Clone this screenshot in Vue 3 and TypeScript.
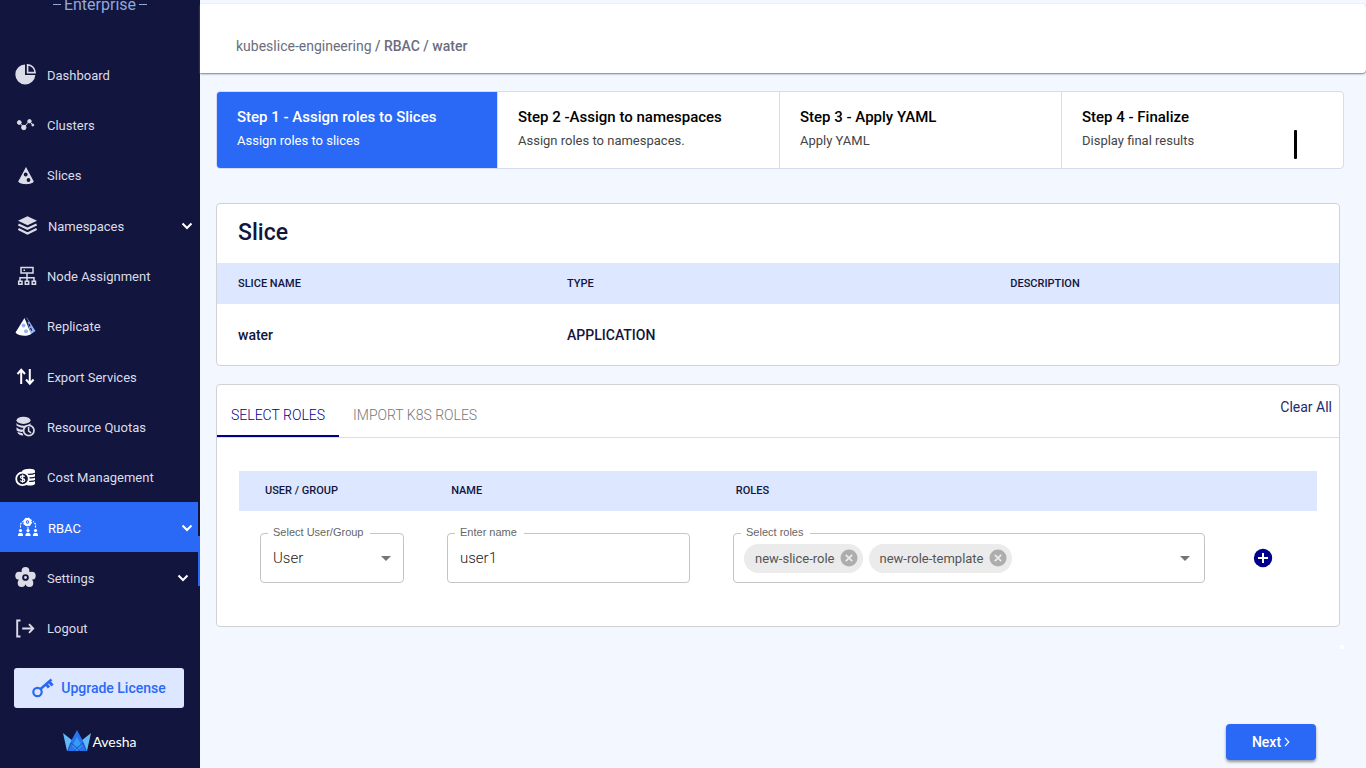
<script setup lang="ts">
import { ref } from 'vue'

interface NavItem {
  id: string
  label: string
  inset?: boolean
  arrow?: boolean
  active?: boolean
}

const nav: NavItem[] = [
  { id: 'dashboard', label: 'Dashboard' },
  { id: 'clusters', label: 'Clusters' },
  { id: 'slices', label: 'Slices' },
  { id: 'namespaces', label: 'Namespaces', inset: true, arrow: true },
  { id: 'nodes', label: 'Node Assignment' },
  { id: 'replicate', label: 'Replicate' },
  { id: 'export', label: 'Export Services' },
  { id: 'quotas', label: 'Resource Quotas' },
  { id: 'cost', label: 'Cost Management' },
  { id: 'rbac', label: 'RBAC', inset: true, arrow: true, active: true },
  { id: 'settings', label: 'Settings', arrow: true },
  { id: 'logout', label: 'Logout' },
]

const steps = [
  { title: 'Step 1 - Assign roles to Slices', text: 'Assign roles to slices' },
  { title: 'Step 2 -Assign to namespaces', text: 'Assign roles to namespaces.' },
  { title: 'Step 3 - Apply YAML', text: 'Apply YAML' },
  { title: 'Step 4 - Finalize', text: 'Display final results' },
]

const subject = ref('User')
const name = ref('user1')
const roles = ref(['new-slice-role', 'new-role-template'])

function removeRole(role: string) {
  roles.value = roles.value.filter((r) => r !== role)
}

function clearAll() {
  roles.value = []
  name.value = ''
}
</script>

<template>
  <div class="app">
    <aside class="sidebar">
      <div class="edition"><span>Enterprise</span></div>
      <nav class="nav">
        <a
          v-for="item in nav"
          :key="item.id"
          href="#"
          class="nav-item"
          :class="{ inset: item.inset, active: item.active }"
        >
          <svg class="nav-icon" viewBox="0 0 24 24" width="24" height="24" aria-hidden="true">
            <g v-if="item.id === 'dashboard'" fill="#dcdce8">
              <path d="M11 1.500A10 10 0 1 0 21.300 12H11z" />
              <path d="M13.600 1.900v7.700h7.500a7.600 7.600 0 0 0-7.500-7.700z" fill="none" stroke="#dcdce8" stroke-width="1.600" />
            </g>
            <g v-else-if="item.id === 'clusters'" fill="#dcdce8" stroke="#dcdce8" stroke-width="1">
              <path d="M5.500 9.500l4.300 5 5.500-6.500 3.500 4" fill="none" />
              <circle cx="5.300" cy="9.500" r="1.900" />
              <circle cx="9.800" cy="14.500" r="2.200" />
              <circle cx="15.500" cy="8.200" r="1.700" />
              <circle cx="18.800" cy="12" r="1" />
            </g>
            <g v-else-if="item.id === 'slices'">
              <path d="M12 3L4.200 17.500c1.500 3.500 14 3.500 15.600 0z" fill="#dcdce8" />
              <circle cx="11.700" cy="10.500" r="1.900" fill="#12153d" />
              <circle cx="14.500" cy="16" r="1.900" fill="#12153d" />
            </g>
            <g v-else-if="item.id === 'namespaces'" fill="none" stroke="#dcdce8" stroke-width="2.100">
              <path d="M11.500 2.200l9.500 4.500-9.500 4.500L2 6.700z" fill="#dcdce8" stroke="none" />
              <path d="M2.400 10.500l9.100 4.300 9.100-4.300M2.400 15l9.100 4.500 9.100-4.500" />
            </g>
            <g v-else-if="item.id === 'nodes'" fill="none" stroke="#dcdce8" stroke-width="1.500">
              <path d="M7 3.500h12v5.600H7zM13 9.100v8M6 17v-3.200h14V17M4.700 17.200h3.300v3.100H4.700zM11.300 17.200h3.400v3.100h-3.400zM18.200 17.200h3.300v3.100h-3.300zM9.500 6.300H11" />
            </g>
            <g v-else-if="item.id === 'replicate'">
              <path d="M12.500 2l9 14-5 3.500z" fill="#95b4f5" />
              <path d="M13.200 4.500l5 12.500" stroke="#12153d" stroke-dasharray="3 1.500" stroke-width="1.200" />
              <path d="M10.500 3L1.500 17.500c2.500 3.500 12 4.500 15.500 1.500z" fill="#fff" />
              <g fill="#95b4f5"><circle cx="9.500" cy="10.500" r="1.900" /><circle cx="12" cy="16.200" r="2" /></g>
            </g>
            <path v-else-if="item.id === 'export'" d="M7.200 19V4.500M3.500 9l3.700-4.200L11 9M15.800 4v14.500M12 14.500l3.800 4.200 3.800-4.200" fill="none" stroke="#fff" stroke-width="2" />
            <g v-else-if="item.id === 'quotas'">
              <ellipse cx="9.500" cy="5.300" rx="7" ry="3.600" fill="#dcdce8" />
              <path d="M2.500 8c2 3.500 12 3.500 14 0v3c-4 3-10 2.500-14-.5zM2.500 12.300c2 2 4 2.300 7 2.500l-1 2.300c-3 0-6-1-6-2.300zM3.500 17l5 1.300.8 2.300c-3 0-5.800-1.500-5.800-3.600z" fill="#dcdce8" />
              <circle cx="14.800" cy="15.500" r="5.200" fill="#12153d" stroke="#dcdce8" stroke-width="1.700" />
              <path d="M14.600 12v4.200l2.500 1.700" fill="none" stroke="#dcdce8" stroke-width="1.500" />
            </g>
            <g v-else-if="item.id === 'cost'">
              <path d="M8 5c2-2.500 13-3.300 13 .3v12.700c-2 2-7 2-10 .5z" fill="#fff" />
              <path d="M13 8.300q5 .5 8-1M14 11.800q5 .5 8-1M14 15.300q5 .5 8-1" fill="none" stroke="#12153d" stroke-width="1.200" />
              <circle cx="8.500" cy="12.800" r="6.300" fill="#12153d" stroke="#fff" stroke-width="1.800" />
              <path d="M10.700 10.700c-1-1.200-4.300-1-4.200.6.100 1.800 4.300.9 4.300 2.900 0 1.700-3.500 1.800-4.600.3M8.600 8.600v8.200" fill="none" stroke="#fff" stroke-width="1.200" />
            </g>
            <g v-else-if="item.id === 'rbac'" fill="#fff">
              <circle cx="11.500" cy="6" r="2.800" fill="none" stroke="#fff" stroke-width="2.200" />
              <circle cx="11.500" cy="6" r="3.900" fill="none" stroke="#fff" stroke-width="1.200" stroke-dasharray="1.600 1.460" />
              <circle cx="11.500" cy="6" r=".8" />
              <path d="M4.500 11.500V8l2.500-2.500M19.500 11.500V8L17 5.500M12 11v2" fill="none" stroke="#fff" stroke-width="1.100" stroke-dasharray="2 1" />
              <g v-for="x in [4.5, 12, 19.5]" :key="x">
                <circle :cx="x" cy="14.500" r="1.600" />
                <path :d="`M${x - 2.6} 20q0-3.200 2.600-3.200t2.600 3.200z`" />
              </g>
            </g>
            <g v-else-if="item.id === 'settings'">
              <g fill="#dcdce8">
                <circle cx="11.500" cy="5" r="3.900" /><circle cx="5.200" cy="9.700" r="3.900" /><circle cx="17.800" cy="9.700" r="3.900" />
                <circle cx="7.600" cy="17" r="3.900" /><circle cx="15.400" cy="17" r="3.900" /><circle cx="11.500" cy="11.500" r="7" />
              </g>
              <circle cx="11.500" cy="11.500" r="2.400" fill="#dcdce8" stroke="#12153d" stroke-width="1.900" />
            </g>
            <path v-else d="M6.500 3.500H3.200v16h3.300M8.200 11.500h11M15 7.200l4.200 4.300-4.200 4.300" fill="none" stroke="#dcdce8" stroke-width="1.900" />
          </svg>
          <span>{{ item.label }}</span>
          <svg v-if="item.arrow" class="arrow" viewBox="0 0 12 8" width="12" height="8" aria-hidden="true">
            <path d="M1.500 1.500L6 6l4.500-4.500" fill="none" stroke="#fff" stroke-width="2" />
          </svg>
        </a>
        <i class="rail"></i>
      </nav>
      <button type="button" class="upgrade">
        <svg viewBox="0 0 22 20" width="22" height="20" fill="none" stroke="#2a69f6" aria-hidden="true">
          <circle cx="5.500" cy="14" r="4.200" stroke-width="2.200" />
          <path d="M8.500 11L19.500 1.500" stroke-width="2.400" />
          <path d="M14 6l3 3.500M17 3.500l3.500 4" stroke-width="3" />
        </svg>
        Upgrade License
      </button>
      <div class="vendor">
        <svg viewBox="0 0 28 22" width="28" height="22" aria-hidden="true">
          <path d="M0 3l10 8-4 10H4z" fill="#63baf8" />
          <path d="M28 3l-10 8 4 10h2z" fill="#63baf8" />
          <path d="M14 0l7 13 3 8H4l3-8z" fill="#2a73ee" />
          <path d="M14 7l5 9-5 5-5-5z" fill="#359bf4" />
          <path d="M5 21l3-8 6 5 6-5 3 8M8 13l9 8M20 13l-9 8" fill="none" stroke="#1750b8" stroke-width=".7" />
        </svg>
        <span>Avesha</span>
      </div>
    </aside>

    <main class="main">
      <header class="topbar">
        <div class="crumbs"><a href="#">kubeslice-engineering</a><b> / RBAC / water</b></div>
      </header>

      <ol class="steps">
        <li v-for="(step, i) in steps" :key="step.title" class="step" :class="{ current: i === 0 }">
          <strong>{{ step.title }}</strong>
          <span>{{ step.text }}</span>
          <i v-if="i === 3" class="caret"></i>
        </li>
      </ol>

      <section class="card slice">
        <h2>Slice</h2>
        <table>
          <thead>
            <tr><th class="c-name">Slice name</th><th class="c-type">Type</th><th>Description</th></tr>
          </thead>
          <tbody>
            <tr><td>water</td><td>APPLICATION</td><td></td></tr>
          </tbody>
        </table>
      </section>

      <section class="card roles">
        <div class="tabs">
          <button type="button" class="tab selected">SELECT ROLES</button>
          <button type="button" class="tab">IMPORT K8S ROLES</button>
          <button type="button" class="clear" @click="clearAll">Clear All</button>
        </div>
        <div class="grid">
          <div class="grid-row grid-head">
            <span>USER / GROUP</span><span>NAME</span><span>ROLES</span>
          </div>
          <div class="grid-row grid-body">
            <div class="field">
              <label for="subject">Select User/Group</label>
              <select id="subject" v-model="subject">
                <option>User</option>
                <option>Group</option>
              </select>
              <svg class="drop" viewBox="0 0 10 5" width="10" height="5" aria-hidden="true"><path d="M0 0h10L5 5z" fill="#757575" /></svg>
            </div>
            <div class="field">
              <label for="name">Enter name</label>
              <input id="name" v-model="name" type="text" />
            </div>
            <div class="field multi">
              <label for="role-list">Select roles</label>
              <span v-for="role in roles" :key="role" class="chip">
                {{ role }}
                <button type="button" :aria-label="`Remove ${role}`" @click="removeRole(role)">
                  <svg viewBox="0 0 18 18" width="18" height="18"><circle cx="9" cy="9" r="8.500" fill="#adadad" /><path d="M5.800 5.800l6.400 6.400M12.200 5.800l-6.400 6.400" stroke="#ebebeb" stroke-width="1.700" /></svg>
                </button>
              </span>
              <button id="role-list" type="button" class="open">
                <svg viewBox="0 0 10 5" width="10" height="5"><path d="M0 0h10L5 5z" fill="#757575" /></svg>
              </button>
            </div>
            <button type="button" class="add" aria-label="Add row">
              <svg viewBox="0 0 20 20" width="20" height="20"><circle cx="10" cy="10" r="9.200" fill="#00008b" /><path d="M10 5v10M5 10h10" stroke="#fff" stroke-width="2" /></svg>
            </button>
          </div>
        </div>
      </section>

      <i class="speck"></i>
      <footer class="actions">
        <button type="button" class="next">
          Next
          <svg viewBox="0 0 6 10" width="6" height="10" aria-hidden="true"><path d="M1 .8L4.800 5 1 9.200" fill="none" stroke="#fff" stroke-width="1.200" /></svg>
        </button>
      </footer>
    </main>
  </div>
</template>

<style>
body {
  margin: 0;
  background: #f3f7ff;
}
</style>

<style scoped>
.app {
  display: grid;
  grid-template-columns: 200px 1fr;
  min-height: 100vh;
  overflow: hidden;
  font-family: Roboto, 'Liberation Sans', sans-serif;
  font-size: 14px;
  color: #12153d;
  box-sizing: border-box;
}
.app *,
.app *::before {
  box-sizing: border-box;
}
button,
input,
select {
  font: inherit;
  color: inherit;
  border: 0;
  padding: 0;
  background: none;
}
button {
  cursor: pointer;
}
a {
  color: inherit;
  text-decoration: none;
}

/* Sidebar */
.sidebar {
  background: #12153d;
  display: flex;
  flex-direction: column;
}
.edition {
  height: 53px;
  margin-top: -4px;
  display: flex;
  justify-content: center;
  gap: 3px;
  font-size: 16px;
  line-height: 18px;
  color: #8fa9dc;
}
.edition::before,
.edition::after {
  content: '';
  width: 8px;
  height: 1px;
  margin-top: 8px;
  background: #8fa9dc;
}
.nav {
  position: relative;
  display: grid;
  grid-auto-rows: 1fr;
  height: 604px;
}
.nav-item {
  display: flex;
  align-items: center;
  gap: 9px;
  margin-right: 2px;
  padding: 2px 9px 0 14px;
  font-size: 13px;
  color: #dcdce8;
}
.nav-item.inset {
  gap: 8px;
  padding: 2px 5px 0 16px;
}
.nav-item.active {
  background: #2a69f6;
  color: #fff;
}
.arrow {
  margin-left: auto;
}
.rail {
  position: absolute;
  right: 0;
  top: 487px;
  width: 2px;
  height: 50px;
  background: #2a69f6;
}
.upgrade {
  display: flex;
  align-items: center;
  justify-content: center;
  gap: 7px;
  height: 40px;
  margin: 15px 16px 0 14px;
  border-radius: 3px;
  background: #dde7ff;
  color: #2a69f6;
  font-weight: 500;
}
.vendor {
  display: flex;
  align-items: center;
  justify-content: center;
  gap: 1px;
  margin-top: 22px;
  font-family: Lato, sans-serif;
  font-size: 14px;
  color: #fff;
}

/* Main area */
.main {
  display: flex;
  flex-direction: column;
  background: #f3f7ff;
}
.topbar {
  margin-top: 4px;
  padding: 33px 36px 17px;
  background: #fff;
  border-radius: 0 4px 4px 0;
  box-shadow: 0 1px 2px #777b88;
}
.crumbs {
  font-size: 14px;
  line-height: 19px;
  color: #6b6d7e;
  white-space: pre;
}
.crumbs b {
  font-weight: 500;
}
.steps {
  display: grid;
  grid-template-columns: 280fr 282fr 282fr 282fr;
  margin: 18px 22px 0 16px;
  padding: 0;
  list-style: none;
  border: 1px solid #d6dcef;
  border-radius: 4px;
  background: #fff;
  overflow: hidden;
}
.step {
  position: relative;
  display: flex;
  flex-direction: column;
  gap: 4px;
  height: 76px;
  padding: 15px 20px 0;
  color: #000;
}
.step + .step {
  border-left: 1px solid #d6dcef;
}
.step strong {
  font-size: 15px;
  line-height: 20px;
  font-weight: 500;
}
.step span {
  font-size: 13px;
  line-height: 20px;
  color: #444;
}
.step.current {
  background: #2a69f6;
  color: #fff;
}
.step.current span {
  color: #fff;
}
.caret {
  position: absolute;
  right: 46px;
  bottom: 9px;
  width: 3px;
  height: 29px;
  border-radius: 1px;
  background: #000;
}

.card {
  margin: 0 26px 0 16px;
  background: #fff;
  border: 1px solid #d0d2d6;
  border-radius: 4px;
}
.slice {
  margin-top: 34px;
}
h2 {
  margin: 0;
  padding: 14px 21px 15px;
  font-size: 23px;
  line-height: 30px;
  font-weight: 500;
}
table {
  width: 100%;
  border-collapse: collapse;
  table-layout: fixed;
}
th,
td {
  padding: 0 21px;
  text-align: left;
}
th {
  height: 41px;
  background: #dde7ff;
  font-size: 11px;
  font-weight: 500;
  text-transform: uppercase;
}
th + th,
td + td {
  padding-left: 0;
}
.c-name {
  width: 31.2%;
}
.c-type {
  width: 39.5%;
}
td {
  height: 61px;
  font-size: 14px;
  font-weight: 500;
}

.roles {
  margin-top: 18px;
}
.tabs {
  display: flex;
  height: 53px;
  border-bottom: 1px solid #dcdde0;
}
.tab {
  padding: 10px 14px 0;
  border-bottom: 2px solid transparent;
  color: #75777d;
  font-weight: 300;
}
.tab.selected {
  border-color: #00008b;
  color: #00008b;
}
.clear {
  margin-left: auto;
  padding: 0 7px 9px 0;
  color: #262a6d;
}
.grid {
  padding: 33px 22px 43px;
}
.grid-row {
  display: grid;
  grid-template-columns: 144fr 243fr 472fr 25px;
  column-gap: 43px;
  padding: 0 44px 0 21px;
}
.grid-head {
  height: 40px;
  align-items: center;
  padding-left: 26px;
  padding-bottom: 2px;
  background: #dde7ff;
  font-size: 11px;
  font-weight: 500;
}
.grid-body {
  padding-top: 22px;
}
.field {
  position: relative;
  display: flex;
  align-items: center;
  height: 50px;
  border: 1px solid #c4c4c4;
  border-radius: 4px;
}
.field label {
  position: absolute;
  left: 7px;
  top: -10px;
  padding: 0 7px 0 5px;
  background: #fff;
  font-family: 'Liberation Sans', sans-serif;
  font-size: 11px;
  line-height: 16px;
  color: #666;
}
.field select,
.field input {
  width: 100%;
  height: 100%;
  padding: 0 12px;
  font-size: 15px;
  font-weight: 300;
  color: #222;
  appearance: none;
  outline: none;
}
.drop {
  position: absolute;
  right: 12px;
  pointer-events: none;
}
.multi {
  gap: 6px;
  padding: 0 14px 0 10px;
}
.chip {
  display: inline-flex;
  align-items: center;
  gap: 5px;
  height: 29px;
  padding: 0 5px 0 11px;
  border-radius: 15px;
  background: #ebebeb;
  font-size: 13px;
  color: #555;
}
.chip svg,
.add svg {
  display: block;
}
.open {
  display: flex;
  align-items: center;
  justify-content: flex-end;
  flex: 1;
  height: 100%;
}
.add {
  align-self: center;
  justify-self: end;
}
.speck {
  align-self: flex-end;
  width: 4px;
  height: 4px;
  margin: 18px 22px 0 0;
  background: #fff;
}
.actions {
  display: flex;
  justify-content: flex-end;
  margin-top: auto;
  padding: 0 50px 8px;
}
.next {
  display: flex;
  align-items: center;
  justify-content: center;
  gap: 3px;
  width: 90px;
  height: 36px;
  border-radius: 4px;
  background: #2a69f6;
  color: #fff;
  font-weight: 500;
  box-shadow: 0 2px 3px rgba(0, 0, 0, 0.4);
}
</style>
